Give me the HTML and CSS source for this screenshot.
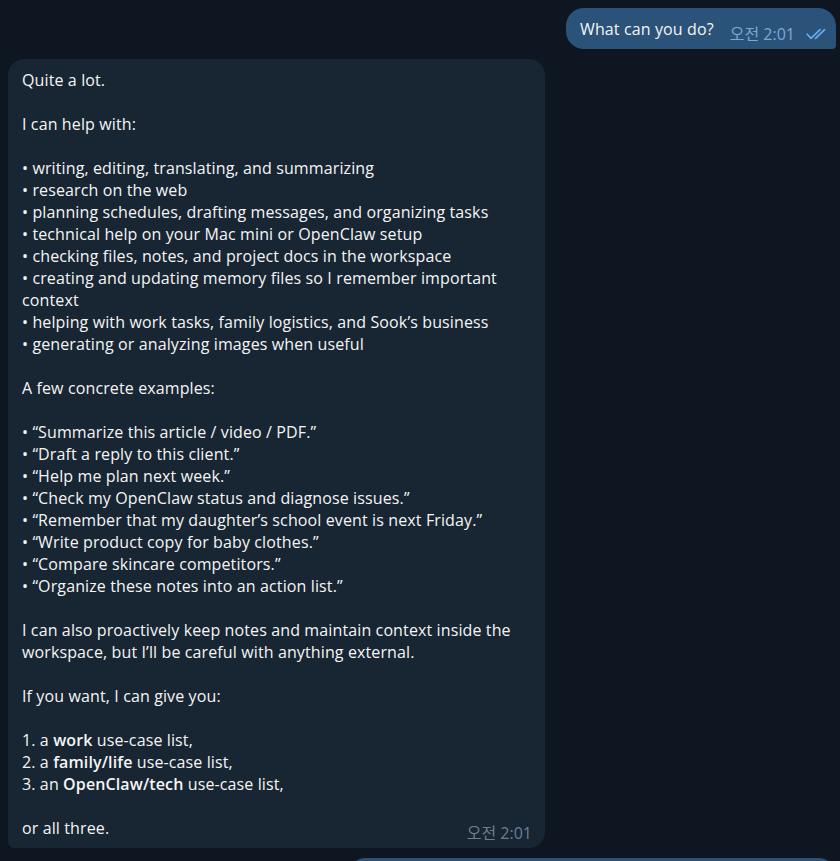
FILE: index.html
```html
<!DOCTYPE html>
<html>
<head>
<meta charset="utf-8">
<link rel="stylesheet" href="styles.css">
</head>
<body>
<div class="chat">
  <div class="row out">
    <div class="bubble bubble-out">
      <span class="msg">What can you do?</span>
      <span class="meta-out">오전 2:01
        <svg class="checks" width="22" height="12" viewBox="0 0 22 12"><path d="M1.2 6.2L5 10.4 14 1.6M9.6 10.4L18.6 1.6" fill="none" stroke="currentColor" stroke-width="1.7" stroke-linecap="round" stroke-linejoin="round"/></svg>
      </span>
    </div>
  </div>
  <div class="row in">
    <div class="bubble bubble-in">
      <p>Quite a lot.</p>
      <p>I can help with:</p>
      <p>• writing, editing, translating, and summarizing<br>• research on the web<br>• planning schedules, drafting messages, and organizing tasks<br>• technical help on your Mac mini or OpenClaw setup<br>• checking files, notes, and project docs in the workspace<br>• creating and updating memory files so I remember important context<br>• helping with work tasks, family logistics, and Sook’s business<br>• generating or analyzing images when useful</p>
      <p>A few concrete examples:</p>
      <p>• “Summarize this article / video / PDF.”<br>• “Draft a reply to this client.”<br>• “Help me plan next week.”<br>• “Check my OpenClaw status and diagnose issues.”<br>• “Remember that my daughter’s school event is next Friday.”<br>• “Write product copy for baby clothes.”<br>• “Compare skincare competitors.”<br>• “Organize these notes into an action list.”</p>
      <p>I can also proactively keep notes and maintain context inside the workspace, but I’ll be careful with anything external.</p>
      <p>If you want, I can give you:</p>
      <p>1. a <b>work</b> use-case list,<br>2. a <b>family/life</b> use-case list,<br>3. an <b>OpenClaw/tech</b> use-case list,</p>
      <p>or all three.</p>
      <span class="meta-in">오전 2:01</span>
    </div>
  </div>
  <div class="row out">
    <div class="bubble bubble-out next"></div>
  </div>
</div>
</body>
</html>
```
FILE: styles.css
```css
html, body {
  margin: 0;
  padding: 0;
  background: #0e1621;
  height: 100%;
  overflow: hidden;
}
.chat {
  display: flex;
  flex-direction: column;
  gap: 10px;
  padding: 8px 4px 0 8px;
  font-family: "Open Sans", "Noto Sans CJK KR", sans-serif;
  font-size: 16px;
  line-height: 22px;
  color: #f5f5f5;
}
.row {
  display: flex;
}
.row.out {
  justify-content: flex-end;
}
.bubble {
  position: relative;
}
.bubble-out {
  background: #2b5278;
  border-radius: 18px 18px 4px 18px;
  display: flex;
  align-items: center;
  height: 41px;
  padding: 0 8px 0 14px;
  box-sizing: border-box;
}
.msg {
  font-size: 16px;
  letter-spacing: 0.12px;
}
.meta-out {
  display: flex;
  align-items: center;
  gap: 11px;
  margin-left: 16px;
  margin-top: 10px;
  font-size: 16px;
  color: #7da8d3;
}
.checks {
  color: #62aef0;
  margin-top: 1px;
}
.bubble-in {
  background: #182533;
  border-radius: 16px 16px 16px 6px;
  width: 537px;
  box-sizing: border-box;
  padding: 10px 14px 9px 14px;
  font-size: 16px;
  letter-spacing: 0.12px;
}
.bubble-in p {
  margin: 0 0 22px 0;
}
.bubble-in p:last-of-type {
  margin-bottom: 0;
}
.bubble-in b {
  font-weight: 600;
}
.meta-in {
  position: absolute;
  right: 13px;
  bottom: 4px;
  font-size: 16px;
  letter-spacing: 0;
  color: #6c7f90;
}
.next {
  width: 488px;
  border-radius: 18px 18px 4px 18px;
}
```
